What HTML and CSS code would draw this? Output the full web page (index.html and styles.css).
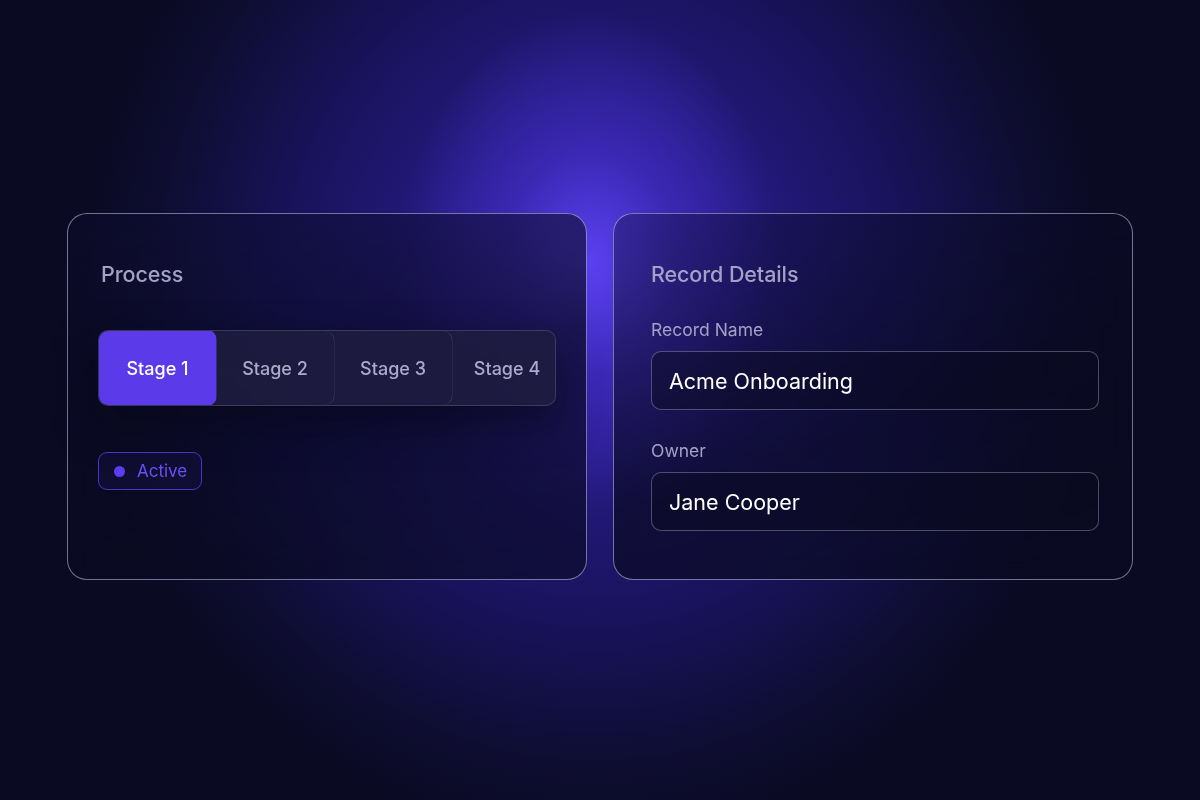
FILE: index.html
```html
<!DOCTYPE html>
<html>
<head>
<meta charset="utf-8">
<link rel="stylesheet" href="styles.css">
</head>
<body>
<main class="stage">
  <section class="card card-process">
    <h2 class="card-title">Process</h2>
    <div class="steps">
      <div class="step step-active">Stage 1</div>
      <div class="step">Stage 2</div>
      <div class="step">Stage 3</div>
      <div class="step">Stage 4</div>
    </div>
    <div class="badge"><span class="badge-dot"></span>Active</div>
  </section>
  <section class="card card-record">
    <h2 class="card-title">Record Details</h2>
    <label class="field-label">Record Name</label>
    <div class="field">Acme Onboarding</div>
    <label class="field-label field-label-2">Owner</label>
    <div class="field">Jane Cooper</div>
  </section>
</main>
</body>
</html>
```
FILE: styles.css
```css
html, body {
  margin: 0;
  padding: 0;
  width: 1200px;
  height: 800px;
  overflow: hidden;
}
body {
  font-family: "Inter", "Lato", "Liberation Sans", sans-serif;
  background-color: #0a0a22;
  background-image:
    radial-gradient(ellipse 190px 250px at 590px 262px, rgba(98, 70, 255, 0.85) 0%, rgba(80, 55, 230, 0.45) 45%, rgba(60, 40, 200, 0) 100%),
    radial-gradient(ellipse 520px 560px at 595px 290px, #33219f 0%, #261a82 30%, #18135a 60%, #0e0d30 85%, #0a0a22 100%);
}
.stage {
  display: flex;
  gap: 26px;
  padding: 213px 0 0 67px;
}
.card {
  box-sizing: border-box;
  height: 367px;
  border: 1.5px solid rgba(205, 200, 240, 0.55);
  border-radius: 20px;
  background: linear-gradient(160deg, rgba(16, 14, 50, 0.35) 0%, rgba(10, 10, 34, 0.72) 55%, rgba(10, 10, 34, 0.6) 100%);
  backdrop-filter: blur(12px);
}
.card-process {
  width: 520px;
  padding: 47px 30px 0 30px;
}
.card-record {
  width: 520px;
  padding: 47px 33px 0 37px;
}
.card-title {
  margin: 0;
  font-size: 21.5px;
  font-weight: 500;
  line-height: 26px;
  color: #a5a1c6;
  letter-spacing: -0.1px;
}
.card-process .card-title {
  padding-left: 3px;
}
.steps {
  margin-top: 43px;
  display: flex;
  height: 76px;
  border-radius: 10px;
  overflow: hidden;
  border: 1px solid rgba(255, 255, 255, 0.14);
  background: rgba(36, 34, 70, 0.55);
  box-shadow: 0 18px 40px rgba(5, 5, 20, 0.55);
  box-sizing: border-box;
}
.step {
  flex: 0 0 119px;
  margin-right: -1px;
  display: flex;
  align-items: center;
  justify-content: center;
  font-size: 18px;
  font-weight: 500;
  color: #aca9c9;
  border-right: 1px solid rgba(255, 255, 255, 0.14);
  border-radius: 0 10px 10px 0;
  box-sizing: border-box;
  background: rgba(30, 28, 62, 0.6);
}
.step-active {
  background: #5a3ae9;
  color: #ffffff;
  border-radius: 10px;
  border-right: none;
  margin-top: -1px;
  margin-bottom: -1px;
  margin-left: -1px;
}
.step:last-child {
  flex-basis: 104px;
  padding-left: 6px;
  border-right: none;
}
.badge {
  margin-top: 46px;
  display: inline-flex;
  align-items: center;
  gap: 12px;
  height: 38px;
  box-sizing: border-box;
  padding: 0 14px 0 15px;
  border: 1.5px solid #4934c4;
  border-radius: 9px;
  font-size: 17px;
  color: #6c4ff5;
  background: rgba(30, 22, 90, 0.25);
}
.badge-dot {
  width: 11px;
  height: 11px;
  border-radius: 50%;
  background: #5b3ef0;
}
.field-label {
  display: block;
  margin-top: 33px;
  font-size: 17.5px;
  line-height: 20px;
  color: #a5a1c6;
}
.field-label-2 {
  margin-top: 31px;
}
.field {
  margin-top: 11px;
  height: 59px;
  box-sizing: border-box;
  border: 1px solid rgba(200, 196, 235, 0.35);
  border-radius: 10px;
  padding: 0 17px;
  display: flex;
  align-items: center;
  font-size: 21.5px;
  color: #ffffff;
  background: rgba(10, 10, 30, 0.45);
}
```
